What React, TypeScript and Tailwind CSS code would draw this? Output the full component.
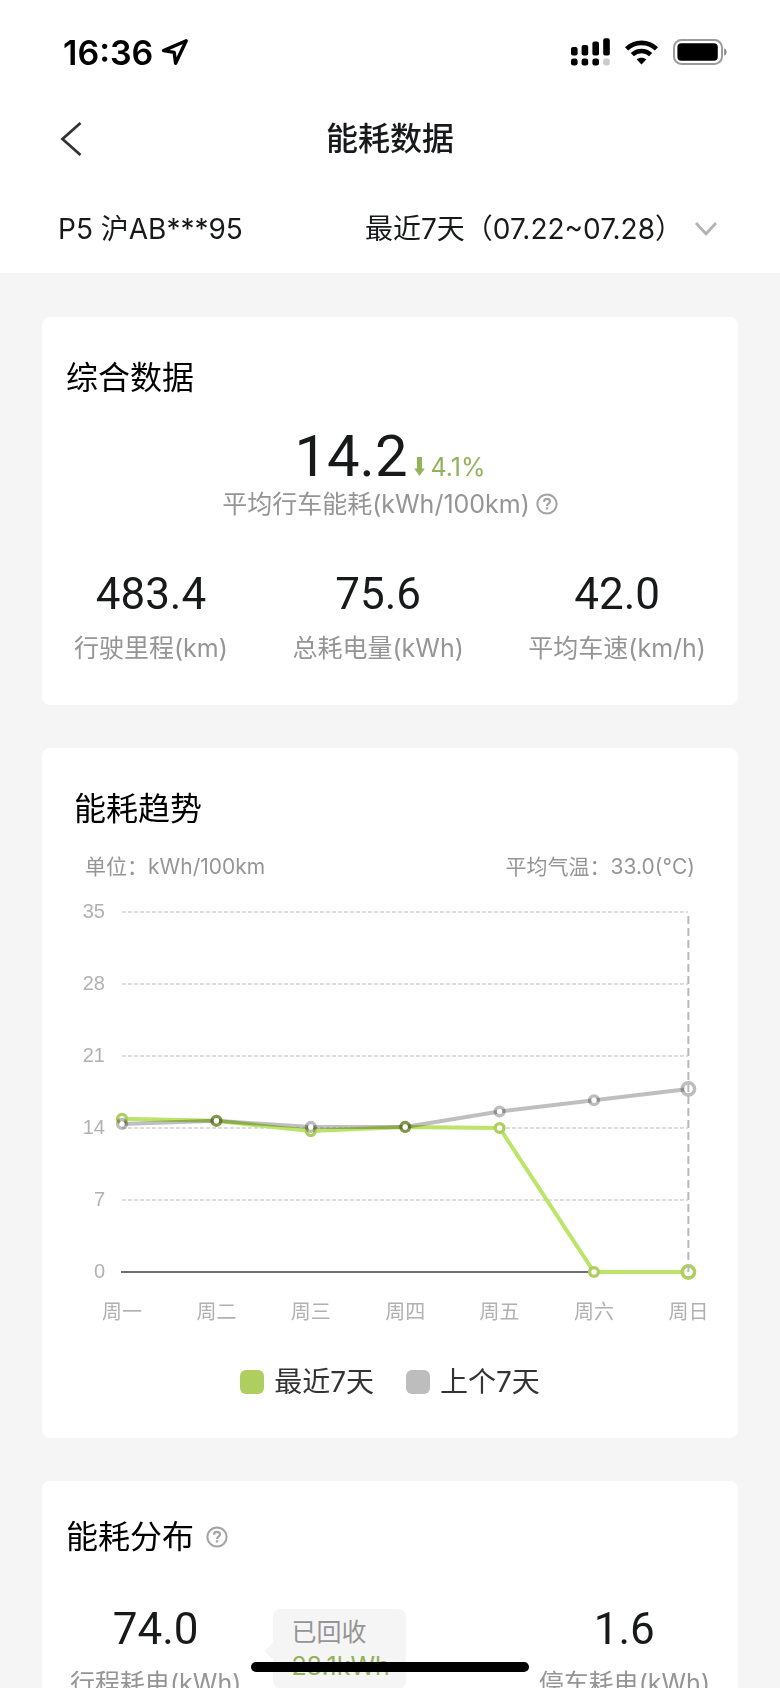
import { useState } from 'react';

const DAYS = ['周一', '周二', '周三', '周四', '周五', '周六', '周日'];
const TICKS = [35, 28, 21, 14, 7, 0];

const THIS_WEEK = [14.9, 14.7, 13.7, 14.1, 14, 0, 0];
const LAST_WEEK = [14.4, 14.7, 14.1, 14.1, 15.6, 16.7, 17.8];

const SUMMARY = [
  { value: '483.4', label: '行驶里程(km)' },
  { value: '75.6', label: '总耗电量(kWh)' },
  { value: '42.0', label: '平均车速(km/h)' },
];

const LEGEND = [
  { name: '最近7天', dot: 'bg-[#aecf5f]' },
  { name: '上个7天', dot: 'bg-[#bdbdbd]' },
];

function HelpIcon() {
  return (
    <svg width="22" height="22" viewBox="0 0 22 22" fill="none" stroke="#a3a3a3" strokeWidth="2">
      <circle cx="11" cy="11" r="9.6" />
      <path d="M8 8.8c0-1.8 1.3-2.9 3-2.9s3 1.1 3 2.6c0 2-3 2.2-3 4.4" strokeWidth="2.1" />
      <path d="M11 14.3v2.2" strokeWidth="2.3" />
    </svg>
  );
}

function StatusBar() {
  return (
    <div className="flex h-26 items-center justify-between pl-[63px] pr-[53px] text-black">
      <div className="flex items-center gap-2">
        <span className="text-[34px] font-semibold">16:36</span>
        <svg width="28" height="28" viewBox="0 0 28 28" fill="none" stroke="currentColor" strokeWidth="3.4" strokeLinejoin="round">
          <path d="M25.2 2.8 2.6 12.6l10.6 1.8 1.4 10.8z" />
        </svg>
      </div>
      <div className="flex items-center gap-[15px]">
        <svg width="39" height="28" viewBox="0 0 39 28" fill="currentColor">
          <rect x="0" y="9" width="6.6" height="8.4" rx="2" />
          <rect x="10.6" y="7" width="6.6" height="10.4" rx="2" />
          <rect x="21.4" y="3.5" width="6.6" height="13.9" rx="2" />
          <rect x="32.2" y="0.3" width="6.6" height="17.1" rx="2" />
          <rect x="0" y="20.4" width="6.6" height="7.2" rx="2.4" />
          <rect x="10.6" y="20.4" width="6.6" height="7.2" rx="2.4" />
          <rect x="21.4" y="20.4" width="6.6" height="7.2" rx="2.4" />
          <rect x="32.2" y="20.4" width="6.6" height="7.2" rx="2.4" fill="#cbcbcb" />
        </svg>
        <svg width="33" height="25" viewBox="0 0 33 25" fill="none" stroke="currentColor" strokeWidth="4.6">
          <path d="M1.6 8.8a21.6 21.6 0 0 1 29.8 0" />
          <path d="M7.3 14.6a13.4 13.4 0 0 1 18.4 0" />
          <path d="M16.5 24.4l-4.8-5c2.6-2.3 7-2.3 9.6 0z" fill="currentColor" stroke="none" />
        </svg>
        <svg width="54" height="26" viewBox="0 0 54 26" fill="none">
          <rect x="1" y="1" width="48" height="24" rx="7.5" stroke="#9b9b9b" strokeWidth="2" />
          <rect x="4.4" y="4.2" width="40.4" height="17.6" rx="4" fill="#000" />
          <path d="M51.2 9.2c3.2 1 3.2 6.6 0 7.6z" fill="#8a8a8a" />
        </svg>
      </div>
    </div>
  );
}

function TrendChart() {
  const x = (i: number) => 80 + i * 94.4;
  const y = (v: number) => 389 - (v / 35) * 360;
  const points = (data: number[]) => data.map((v, i) => `${x(i)},${y(v)}`).join(' ');

  // last week is laid over this week, so it blends with the line under it
  const series = [
    { data: THIS_WEEK, line: '#bbe468', ring: '#aecf5f', blend: '' },
    { data: LAST_WEEK, line: '#bfbfbf', ring: '#bdbdbd', blend: 'mix-blend-multiply' },
  ];

  return (
    <svg viewBox="0 0 696 460" className="block w-full">
      {/* Grid */}
      {TICKS.map((t) => (
        <g key={t}>
          <text x="63" y={y(t) + 6} textAnchor="end" fill="#b1b1b1" className="font-['Liberation_Sans',sans-serif] text-[20px]">
            {t}
          </text>
          {t === 0 ? (
            <line x1="79" x2={x(5)} y1={y(t)} y2={y(t)} stroke="#6e7079" strokeWidth="2" />
          ) : (
            <line x1="80" x2="646" y1={y(t)} y2={y(t)} stroke="#d2d2d2" strokeWidth="1.4" strokeDasharray="4 2" />
          )}
        </g>
      ))}
      {DAYS.map((d, i) => (
        <text key={d} x={x(i)} y="436" textAnchor="middle" fill="#b1b1b1" className="text-[20px] font-[390]">
          {d}
        </text>
      ))}

      {/* Lines */}
      {series.map((s) => (
        <g key={s.line}>
          <polyline points={points(s.data)} fill="none" stroke={s.line} strokeWidth="4" strokeLinejoin="round" className={s.blend} />
          {s.data.map((v, i) => (
            <circle
              key={i}
              cx={x(i)}
              cy={y(v)}
              r={i === s.data.length - 1 ? 6 : 4.2}
              fill="none"
              stroke={s.ring}
              strokeWidth="3.8"
              className={s.blend}
            />
          ))}
          {s.data.map((v, i) => (
            <circle key={i} cx={x(i)} cy={y(v)} r={i === s.data.length - 1 ? 4.2 : 2.7} fill="#fff" />
          ))}
        </g>
      ))}
      <line x1={x(6)} x2={x(6)} y1="33" y2="389" stroke="#b9b9b9" strokeWidth="2" strokeDasharray="8 4" />
    </svg>
  );
}

function Stat({ value, label }: { value: string; label: string }) {
  return (
    <div className="flex flex-col items-center gap-2.5">
      <span className="font-['Roboto',sans-serif] text-[44px] leading-[52px] text-[#18191a]">{value}</span>
      <span className="text-[25px] leading-9 font-[390] text-[#959595]">{label}</span>
    </div>
  );
}

export default function App() {
  const [period, setPeriod] = useState('7d');

  return (
    <div
      lang="zh-CN"
      className="relative flex h-screen flex-col overflow-hidden bg-[#f5f5f5] font-['Inter','Noto_Sans_CJK_SC',sans-serif]"
    >
      <header className="shrink-0 bg-white pb-4">
        <StatusBar />

        <div className="grid h-[69px] grid-cols-[1fr_auto_1fr] items-center px-15">
          <button aria-label="返回" className="justify-self-start">
            <svg width="22" height="34" viewBox="0 0 22 34" fill="none" stroke="#333" strokeWidth="2.8">
              <path d="M20.5 1 2.5 17l18 16" />
            </svg>
          </button>
          <h1 className="text-[32px] font-medium text-[#18191a]">能耗数据</h1>
        </div>

        <div className="mt-7 flex h-14 items-center justify-between pl-[58px] pr-[63px] text-[28px] font-[390] text-[#18191a]">
          <span>P5 沪AB***95</span>
          <div className="flex items-center gap-2">
            <select
              aria-label="统计周期"
              value={period}
              onChange={(e) => setPeriod(e.target.value)}
              className="appearance-none bg-transparent"
            >
              <option value="7d">最近7天（07.22~07.28）</option>
            </select>
            <svg width="22" height="16" viewBox="0 0 22 16" fill="none" stroke="#b3b3b3" strokeWidth="2.8">
              <path d="M1 2l10 11L21 2" />
            </svg>
          </div>
        </div>
      </header>

      <main className="flex min-h-0 flex-1 flex-col gap-[43px] overflow-hidden px-[42px] pt-11">
        {/* Summary */}
        <section className="shrink-0 rounded-lg bg-white pt-[41px] pb-[39px]">
          <h2 className="px-6 text-[32px] leading-10 font-[390] text-black">综合数据</h2>

          <div className="mt-7 flex flex-col items-center">
            <div className="flex items-baseline gap-1.5">
              <span className="font-['Roboto',sans-serif] text-[58px] leading-[60px] text-[#18191a]">14.2</span>
              <span className="flex items-baseline gap-1.5 text-[25px] leading-8 font-[390] text-[#91b35a]">
                <svg width="11" height="19" viewBox="0 0 10 18" fill="currentColor">
                  <path d="M2.6 0h4.8v11H10l-5 7-5-7h2.6z" />
                </svg>
                4.1%
              </span>
            </div>
            <div className="flex items-center gap-1.5 text-[25px] leading-9 font-[390] text-[#959595]">
              平均行车能耗(kWh/100km)
              <button aria-label="能耗说明">
                <HelpIcon />
              </button>
            </div>
          </div>

          <div className="mt-[46px] flex justify-between px-8">
            {SUMMARY.map((s) => (
              <Stat key={s.label} value={s.value} label={s.label} />
            ))}
          </div>
        </section>

        {/* Trend */}
        <section className="shrink-0 rounded-lg bg-white pt-[41px] pb-9">
          <h2 className="px-8 text-[32px] leading-10 font-[390] text-black">能耗趋势</h2>
          <div className="mt-[22px] flex justify-between px-[43px] text-[21px] leading-8 font-[390] text-[#959595]">
            <span>单位：kWh/100km</span>
            <span>平均气温：33.0(°C)</span>
          </div>
          <TrendChart />
          <div className="mt-[19px] flex justify-center gap-8">
            {LEGEND.map((l) => (
              <div key={l.name} className="flex items-center gap-2.5">
                <span className={`size-6 rounded-md ${l.dot}`} />
                <span className="text-[28px] leading-10 font-[390] text-[#333]">{l.name}</span>
              </div>
            ))}
          </div>
        </section>

        {/* Distribution */}
        <section className="shrink-0 rounded-lg bg-white pt-9 pb-10">
          <div className="flex items-center gap-3 px-6">
            <h2 className="text-[32px] leading-10 font-[390] text-black">能耗分布</h2>
            <button aria-label="分布说明">
              <HelpIcon />
            </button>
          </div>
          <div className="mt-[46px] flex items-start px-7">
            <Stat value="74.0" label="行程耗电(kWh)" />
            <div className="relative mt-1.5 ml-8 w-[133px] rounded-lg bg-[#f5f5f5] py-1.5 pl-[18px] text-[25px] leading-[34px] font-[390]">
              <span className="absolute top-9 -left-1.5 size-3 rotate-45 bg-[#f5f5f5]" />
              <p className="text-[#959595]">已回收</p>
              <p className="text-[#91b35a]">28.1kWh</p>
            </div>
            <div className="ml-auto">
              <Stat value="1.6" label="停车耗电(kWh)" />
            </div>
          </div>
        </section>
      </main>

      {/* Home indicator */}
      <div className="absolute bottom-4 left-1/2 h-2.5 w-[278px] -translate-x-1/2 rounded-full bg-black" />
    </div>
  );
}
